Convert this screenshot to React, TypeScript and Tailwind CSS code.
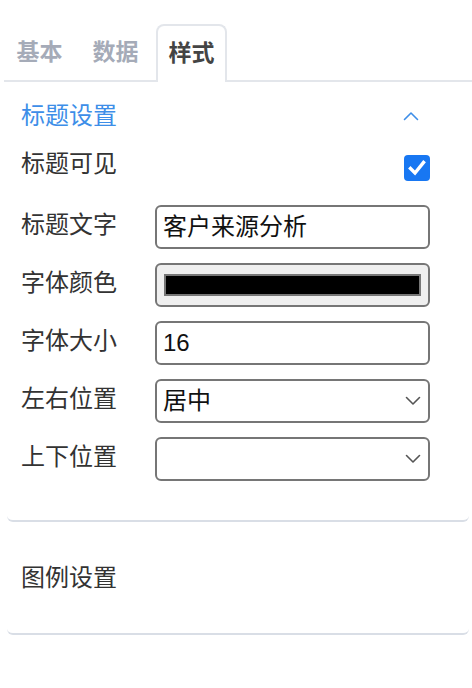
import React from "react";

const font = { fontFamily: '"Liberation Sans", "Noto Sans CJK SC", sans-serif' };

function Chevron({ up = false, color }: { up?: boolean; color: string }) {
  return (
    <svg width="16" height="10" viewBox="0 0 16 10" fill="none">
      <path
        d={up ? "M1.5 8.5 L8 2 L14.5 8.5" : "M1.5 1.5 L8 8 L14.5 1.5"}
        stroke={color}
        strokeWidth="1.6"
        strokeLinecap="round"
        strokeLinejoin="round"
      />
    </svg>
  );
}

function Row({ label, children }: { label: string; children: React.ReactNode }) {
  return (
    <div className="flex items-start">
      <div className="w-[134px] shrink-0 text-[24px] leading-[40px] text-[#333]">{label}</div>
      {children}
    </div>
  );
}

function TextBox({ value }: { value: string }) {
  return (
    <div className="flex h-[44px] w-[275px] items-center rounded-[6px] border-2 border-[#767676] bg-white px-[6px] text-[24px] text-[#111]">
      {value}
    </div>
  );
}

function SelectBox({ value }: { value: string }) {
  return (
    <div className="flex h-[44px] w-[275px] items-center justify-between rounded-[6px] border-2 border-[#767676] bg-white pl-[6px] pr-[7px] text-[24px] text-[#111]">
      <span>{value}</span>
      <Chevron color="#555" />
    </div>
  );
}

export default function App() {
  return (
    <div className="min-h-[688px] w-[472px] bg-white" style={font}>
      {/* Tabs */}
      <div className="ml-[4px] flex h-[82px] items-end gap-[5px] border-b-2 border-[#e3e6eb] pl-0">
        <div className="flex h-[56px] w-[71px] items-center justify-center text-[23px] font-bold text-[#a5abb8]">
          基本
        </div>
        <div className="flex h-[56px] w-[71px] items-center justify-center text-[23px] font-bold text-[#a5abb8]">
          数据
        </div>
        <div className="-mb-[2px] flex h-[58px] w-[71px] items-center justify-center rounded-t-[8px] border-2 border-b-0 border-[#e3e6eb] bg-white pb-[2px] text-[23px] font-bold text-[#444]">
          样式
        </div>
      </div>

      {/* Card 1 */}
      <div className="ml-[7px] mr-[3px] rounded-b-[6px] border-b-2 border-[#d9dee6] pb-[39px] pl-[14px] pr-[39px]">
        <div className="flex h-[68px] items-center justify-between">
          <span className="text-[24px] text-[#3d8ee8]">标题设置</span>
          <span className="mr-[11px] flex">
            <Chevron up color="#3d8ee8" />
          </span>
        </div>
        <div className="flex items-start justify-between">
          <span className="text-[24px] leading-[28px] text-[#333]">标题可见</span>
          <div className="mt-[5px] flex h-[26px] w-[26px] items-center justify-center rounded-[4px] bg-[#1877f2]">
            <svg width="18" height="16" viewBox="0 0 18 16" fill="none">
              <path d="M2.5 8.5 L7 13 L15.5 2.5" stroke="white" strokeWidth="3.4" strokeLinecap="square" />
            </svg>
          </div>
        </div>
        <div className="mt-[24px] flex flex-col gap-[14px]">
          <Row label="标题文字">
            <TextBox value="客户来源分析" />
          </Row>
          <Row label="字体颜色">
            <div className="flex h-[44px] w-[275px] items-center rounded-[6px] border-2 border-[#767676] bg-[#efefef] px-[7px]">
              <div className="h-[22px] w-full border-2 border-[#777] bg-black" />
            </div>
          </Row>
          <Row label="字体大小">
            <TextBox value="16" />
          </Row>
          <Row label="左右位置">
            <SelectBox value="居中" />
          </Row>
          <Row label="上下位置">
            <SelectBox value="" />
          </Row>
        </div>
      </div>

      {/* Card 2 */}
      <div className="ml-[7px] mr-[3px] flex h-[113px] items-center rounded-b-[6px] border-b-2 border-[#d9dee6] pl-[14px]">
        <span className="text-[24px] text-[#333]">图例设置</span>
      </div>
    </div>
  );
}
